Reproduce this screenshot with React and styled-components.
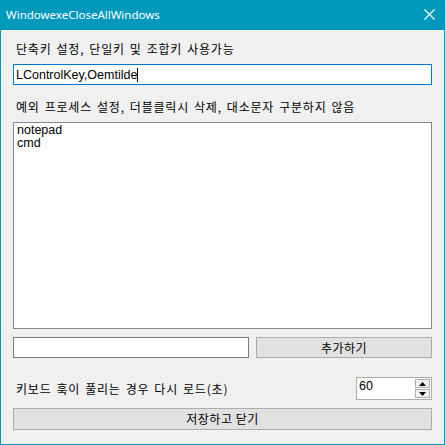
import { createGlobalStyle, styled } from "styled-components";

const GlobalStyle = createGlobalStyle`
  html, body {
    margin: 0;
    padding: 0;
    background: #ffffff;
  }
  * {
    box-sizing: border-box;
  }
`;

export default function App() {
  const processes = ["notepad", "cmd"];

  return (
    <>
      <GlobalStyle />
      <Window>
        <TitleBar>
          <Title>WindowexeCloseAllWindows</Title>
          <CloseButton>
            <svg width="11" height="11" viewBox="0 0 11 11">
              <path d="M0.5 0.5 L10.5 10.5 M10.5 0.5 L0.5 10.5" stroke="#fff" strokeWidth="1.1" fill="none" />
            </svg>
          </CloseButton>
        </TitleBar>
        <Body>
          <Label $top={11}>단축키 설정, 단일키 및 조합키 사용가능</Label>
          <TextBox $focused $top={7}>
            LControlKey,Oemtilde<Caret />
          </TextBox>
          <Label $top={14}>예외 프로세스 설정, 더블클릭시 삭제, 대소문자 구분하지 않음</Label>
          <ListBox>
            {processes.map((p) => (
              <ListItem key={"proc " + p}>{p}</ListItem>
            ))}
          </ListBox>
          <AddRow>
            <TextBox />
            <Button $height={21}>추가하기</Button>
          </AddRow>
          <ReloadRow>
            <Label $top={0}>키보드 훅이 풀리는 경우 다시 로드(초)</Label>
            <NumberBox>
              <NumberValue>60</NumberValue>
              <Spinner>
                <SpinButton>
                  <svg width="7" height="4" viewBox="0 0 7 4"><path d="M0 4 L3.5 0 L7 4 Z" fill="#000" /></svg>
                </SpinButton>
                <SpinButton>
                  <svg width="7" height="4" viewBox="0 0 7 4"><path d="M0 0 L3.5 4 L7 0 Z" fill="#000" /></svg>
                </SpinButton>
              </Spinner>
            </NumberBox>
          </ReloadRow>
          <Button $height={22} $top={8}>저장하고 닫기</Button>
        </Body>
      </Window>
    </>
  );
}

const Window = styled.div`
  width: 445px;
  height: 445px;
  display: flex;
  flex-direction: column;
  border: 1px solid #0099bc;
  border-top: none;
  background: #f0f0f0;
  font-family: "Noto Sans CJK KR", "Noto Sans", sans-serif;
  font-size: 12px;
  color: #000;
`;

const TitleBar = styled.div`
  height: 30px;
  flex: none;
  margin: 0 -1px;
  padding: 0 10px 0 6px;
  background: #0099bc;
  display: flex;
  align-items: center;
  justify-content: space-between;
`;

const Title = styled.span`
  color: #fff;
  font-family: "Noto Sans", "Open Sans", sans-serif;
  font-size: 11.5px;
  padding-bottom: 2px;
`;

const CloseButton = styled.div`
  width: 11px;
  height: 11px;
  display: flex;
  margin-bottom: 2px;
`;

const Body = styled.div`
  flex: 1;
  display: flex;
  flex-direction: column;
  padding: 0 12px 0 12px;
`;

const Label = styled.div`
  margin-top: ${(p) => p.$top}px;
  padding-left: 3px;
  line-height: 16px;
  height: 16px;
  white-space: nowrap;
  word-spacing: 1.5px;
  letter-spacing: 0.8px;
`;

const TextBox = styled.div`
  margin-top: ${(p) => p.$top || 0}px;
  height: 21px;
  background: #fff;
  border: 1px solid ${(p) => (p.$focused ? "#0078d7" : "#7a7a7a")};
  padding: 0 2px;
  display: flex;
  align-items: center;
  font-family: "Liberation Sans", sans-serif;
  font-size: 12.5px;
  white-space: nowrap;
`;

const Caret = styled.span`
  display: inline-block;
  width: 1px;
  height: 14px;
  background: #000;
`;

const ListBox = styled.div`
  margin-top: 7px;
  height: 207px;
  background: #fff;
  border: 1px solid #828790;
  padding: 1px 3px;
  font-family: "Liberation Sans", sans-serif;
  font-size: 12.5px;
`;

const ListItem = styled.div`
  line-height: 13px;
`;

const AddRow = styled.div`
  margin-top: 8px;
  display: grid;
  grid-template-columns: 236px 1fr;
  gap: 7px;
`;

const Button = styled.div`
  margin-top: ${(p) => p.$top || 0}px;
  height: ${(p) => p.$height}px;
  background: #e1e1e1;
  border: 1px solid #adadad;
  display: flex;
  align-items: center;
  justify-content: center;
  padding-bottom: 1px;
  letter-spacing: 0.5px;
`;

const ReloadRow = styled.div`
  margin-top: 19px;
  display: flex;
  align-items: center;
  justify-content: space-between;
`;

const NumberBox = styled.div`
  width: 76px;
  height: 23px;
  background: #fff;
  border: 1px solid #adadad;
  display: flex;
  justify-content: space-between;
  padding: 1px;
`;

const NumberValue = styled.span`
  font-family: "Liberation Sans", sans-serif;
  font-size: 12.5px;
  line-height: 14px;
  padding-left: 1px;
`;

const Spinner = styled.div`
  width: 15px;
  display: flex;
  flex-direction: column;
  gap: 1px;
`;

const SpinButton = styled.div`
  flex: 1;
  background: #f0f0f0;
  border: 1px solid #adadad;
  display: flex;
  align-items: center;
  justify-content: center;
`;
